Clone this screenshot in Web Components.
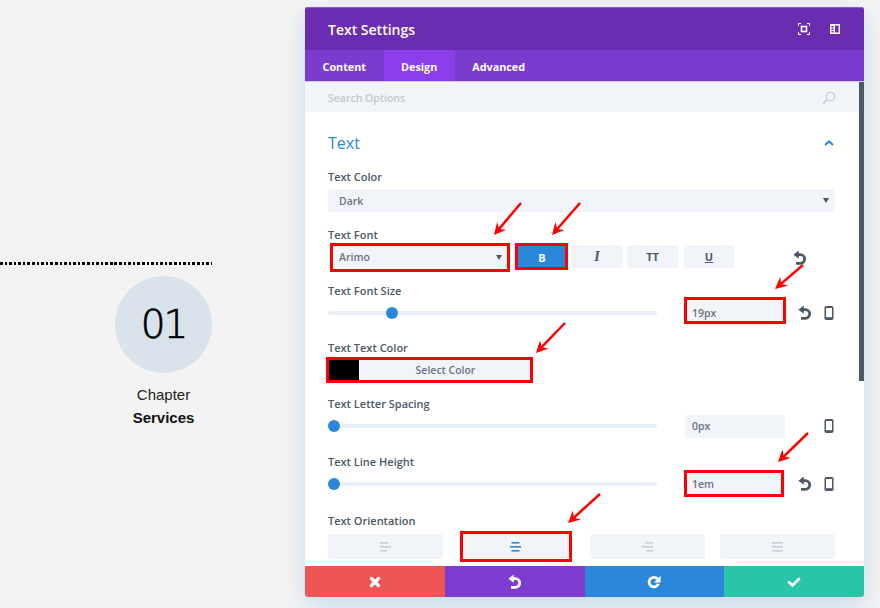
<!DOCTYPE html>
<html>
<head>
<meta charset="utf-8">
<title>Text Settings</title>
<style>
html,body{margin:0;height:100%;overflow:hidden;background:#f3f3f3;}
body{font-family:"Open Sans",sans-serif;}
</style>
</head>
<body>
<x-page>
	<x-chapter slot="left" number="01" line1="Chapter" line2="Services"></x-chapter>
	<x-panel slot="right" heading="Text Settings">
		<x-field label="Text Color" gap="4" after="15"><x-select value="Dark" height="23"></x-select></x-field>
		<x-field label="Text Font" gap="1" after="13">
			<div style="display:flex;width:507px;height:26px;align-items:flex-start">
				<x-select value="Arimo" height="24" style="width:178px;margin:1px 0 0 2px;padding-left:9px"></x-select>
				<x-toggle active style="width:52px;margin-left:8px;height:26px">B</x-toggle>
				<x-toggle style="width:52px;margin-left:3px;margin-top:1px"><b style="font:italic 700 14px 'Liberation Serif',serif">I</b></x-toggle>
				<x-toggle style="width:51px;margin-left:4px;margin-top:1px">TT</x-toggle>
				<x-toggle style="width:50px;margin-left:6px;margin-top:1px"><u>U</u></x-toggle>
				<x-icon name="undo" style="margin:6px 0 0 58px"></x-icon>
			</div>
		</x-field>
		<x-field label="Text Font Size" gap="2" after="15"><x-range pos="64" value="19px" undo></x-range></x-field>
		<x-field label="Text Text Color" gap="2" after="14"><x-color></x-color></x-field>
		<x-field label="Text Letter Spacing" gap="2" after="16"><x-range pos="6" value="0px"></x-range></x-field>
		<x-field label="Text Line Height" gap="2" after="17"><x-range pos="6" value="1em" undo></x-range></x-field>
		<x-field label="Text Orientation" gap="5" after="0">
			<div style="display:flex;width:507px;height:25px">
				<x-align lines="left" style="width:115px"></x-align>
				<x-align lines="center" active style="width:111px;margin-left:17px"></x-align>
				<x-align lines="right" style="width:115px;margin-left:19px"></x-align>
				<x-align lines="full" style="width:115px;margin-left:15px"></x-align>
			</div>
		</x-field>
	</x-panel>
</x-page>
<x-marks></x-marks>

<script>
const ICONS = {
	undo:`<svg width="16" height="16" viewBox="0 0 16 16"><path d="M5 4.700h3.400a4.300 4.300 0 0 1 0 8.600H4" fill="none" stroke="currentColor" stroke-width="2.800"/><path d="M6.800 .6v8.200L1.400 4.700z" fill="currentColor"/></svg>`,
	redo:`<svg width="16" height="16" viewBox="0 0 16 16"><path d="M11.400 4.800a4.800 4.800 0 1 0 1 5" fill="none" stroke="currentColor" stroke-width="2.800"/><path d="M14.600 1.800v6.800H7.800z" fill="currentColor"/></svg>`,
	phone:`<svg width="16" height="16" viewBox="0 0 16 16"><rect x="3.500" y="1" width="9" height="14" rx="1.800" fill="currentColor"/><rect x="5" y="3" width="6" height="9.200" fill="#fff"/></svg>`,
	close:`<svg width="16" height="16" viewBox="0 0 16 16"><path d="M4.500 4.500l7 7M11.500 4.500l-7 7" fill="none" stroke="currentColor" stroke-width="3.400" stroke-linecap="round"/></svg>`,
	check:`<svg width="16" height="16" viewBox="0 0 16 16"><path d="M3 8.200l3.400 3.200L13 5" fill="none" stroke="currentColor" stroke-width="2.800" stroke-linecap="round"/></svg>`,
	focus:`<svg width="12" height="12" viewBox="0 0 12 12"><path d="M.5 3V.5H3M9 .5h2.500V3M11.500 9v2.500H9M3 11.500H.5V9" fill="none" stroke="currentColor"/><rect x="3.500" y="3.500" width="5" height="5" fill="none" stroke="currentColor" stroke-width="1.600"/></svg>`,
	sidebar:`<svg width="12" height="12" viewBox="0 0 12 12"><path fill-rule="evenodd" d="M1 1h10v10H1zM6 2.500v7h3.600v-7zM2.400 3v1.500h2.200V3zM2.400 5.500V7h2.200V5.500zM2.400 8v1.500h2.200V8z" fill="currentColor"/></svg>`,
	search:`<svg width="14" height="14" viewBox="0 0 14 14"><circle cx="8.500" cy="5.500" r="4.200" fill="none" stroke="currentColor" stroke-width="1.300"/><path d="M5.400 8.600L1.200 12.800" stroke="currentColor" stroke-width="2"/></svg>`,
	up:`<svg width="10" height="6" viewBox="0 0 10 6"><path d="M1 5l4-3.600L9 5" fill="none" stroke="currentColor" stroke-width="2"/></svg>`
};

class XPage extends HTMLElement {
	constructor(){
		super();
		this.attachShadow({mode:"open"}).innerHTML = `<style>
			:host{display:flex;width:880px;height:608px;overflow:hidden;}
			.left{flex:none;width:212px;padding-top:262px;box-sizing:border-box;}
			.right{flex:none;margin-left:93px;padding-top:7px;}
		</style>
		<div class="left"><slot name="left"></slot></div>
		<div class="right"><slot name="right"></slot></div>`;
	}
}

class XChapter extends HTMLElement {
	connectedCallback(){
		this.attachShadow({mode:"open"}).innerHTML = `<style>
			:host{display:block;font-family:"Liberation Sans",Arial,sans-serif;color:#222;}
			.rule{height:3px;background:repeating-linear-gradient(90deg,#000 0 2.600px,transparent 2.600px 4.580px);}
			.col{width:97px;margin:11px 0 0 auto;text-align:center;}
			.num{width:97px;height:97px;border-radius:50%;background:#dae3eb;color:#000;display:flex;align-items:center;justify-content:center;
				font:200 39px "DejaVu Sans",sans-serif;letter-spacing:-2px;-webkit-text-stroke:.7px #000;}
			.l1{font-size:15px;line-height:23px;margin-top:10px;}
			.l2{font-size:15px;line-height:23px;font-weight:700;color:#111;}
		</style>
		<div class="rule"></div>
		<div class="col">
			<div class="num">${this.getAttribute("number")}</div>
			<div class="l1">${this.getAttribute("line1")}</div>
			<div class="l2">${this.getAttribute("line2")}</div>
		</div>`;
	}
}

class XPanel extends HTMLElement {
	connectedCallback(){
		this.attachShadow({mode:"open"}).innerHTML = `<style>
			:host{display:flex;flex-direction:column;width:559px;height:590px;background:#fff;border-radius:3px;overflow:hidden;box-shadow:0 8px 22px rgba(43,135,218,.22);color:#4c5866;font-family:"Open Sans",sans-serif;}
			header{flex:none;height:43px;box-sizing:border-box;background:#6a2db2;color:#fff;display:flex;align-items:center;padding:0 23px;font-size:14px;font-weight:600;border-top:1px solid #8b5cc9;}
			header span{flex:1;}
			header .i{display:flex;margin-left:19px;}
			nav{flex:none;height:32px;box-sizing:border-box;background:#7b3bce;display:flex;color:#fff;font-size:10.800px;font-weight:700;line-height:33px;border-bottom:1px solid #d8c8ee;}
			nav a{padding:0 17.500px;}
			nav a.on{background:#8c3eea;}
			.body{flex:1;min-height:0;display:flex;}
			.main{flex:1;min-width:0;display:flex;flex-direction:column;overflow:hidden;}
			.search{flex:none;height:30px;box-sizing:border-box;padding:1px 23px 0;background:#f1f4f8;display:flex;align-items:center;font-size:10.500px;font-weight:600;color:#c4c9cf;}
			.search span{flex:1;}
			.search .i{color:#c6cfd9;display:flex;}
			.scroll{flex:1;min-height:0;overflow:hidden;padding:20px 23px 0;}
			.title{display:flex;align-items:center;justify-content:space-between;color:#2b87da;font-size:16px;line-height:22px;padding-right:1px;margin-bottom:15px;}
			.title .i{display:flex;margin-right:1px;}
			.bar{flex:none;width:5px;background:linear-gradient(#4c5866 299px,#fff 299px);}
			footer{flex:none;height:31px;display:flex;color:#fff;}
			footer div{flex:1;display:flex;align-items:center;justify-content:center;}
			.f1{background:#ef5555;}.f2{background:#7d3bcf;}.f3{background:#2b87da;}.f4{background:#29c4a9;}
		</style>
		<header><span>${this.getAttribute("heading")}</span><div class="i">${ICONS.focus}</div><div class="i">${ICONS.sidebar}</div></header>
		<nav><a>Content</a><a class="on">Design</a><a>Advanced</a></nav>
		<div class="body">
			<div class="main">
				<div class="search"><span>Search Options</span><div class="i">${ICONS.search}</div></div>
				<div class="scroll">
					<div class="title"><span>Text</span><div class="i">${ICONS.up}</div></div>
					<slot></slot>
				</div>
			</div>
			<div class="bar"></div>
		</div>
		<footer><div class="f1">${ICONS.close}</div><div class="f2">${ICONS.undo}</div><div class="f3">${ICONS.redo}</div><div class="f4">${ICONS.check}</div></footer>`;
	}
}

class XField extends HTMLElement {
	connectedCallback(){
		this.attachShadow({mode:"open"}).innerHTML = `<style>
			:host{display:block;width:507px;margin-bottom:${this.getAttribute("after")}px;}
			label{display:block;font-size:11px;font-weight:600;line-height:16px;color:#4c5866;margin-bottom:${this.getAttribute("gap")}px;}
		</style>
		<label>${this.getAttribute("label")}</label><slot></slot>`;
	}
}

class XSelect extends HTMLElement {
	connectedCallback(){
		this.attachShadow({mode:"open"}).innerHTML = `<style>
			:host{display:flex;align-items:center;height:${this.getAttribute("height")}px;background:#f1f4f8;border-radius:3px;padding:0 6px 0 11px;box-sizing:border-box;font-size:10.500px;font-weight:600;color:#6a7583;}
			span{flex:1;}
			i{width:0;height:0;border:3.500px solid transparent;border-top:5px solid #4c5866;border-bottom:0;}
		</style><span>${this.getAttribute("value")}</span><i></i>`;
	}
}

class XToggle extends HTMLElement {
	connectedCallback(){
		const on = this.hasAttribute("active");
		this.attachShadow({mode:"open"}).innerHTML = `<style>
			:host{display:flex;align-items:center;justify-content:center;height:23px;box-sizing:border-box;border-radius:3px;font-size:11px;font-weight:700;background:${on?"#2b87da":"#f1f4f8"};color:${on?"#fff":"#4c5866"};}
		</style><slot></slot>`;
	}
}

class XIcon extends HTMLElement {
	connectedCallback(){
		this.attachShadow({mode:"open"}).innerHTML = `<style>
			:host{display:inline-flex;flex:none;color:#4c5866;width:16px;height:16px;}
		</style>${ICONS[this.getAttribute("name")]}`;
	}
}

class XRange extends HTMLElement {
	connectedCallback(){
		const undo = this.hasAttribute("undo");
		this.attachShadow({mode:"open"}).innerHTML = `<style>
			:host{display:flex;align-items:center;height:24px;}
			.track{position:relative;width:329px;height:4px;border-radius:2px;background:#e8eef4;flex:none;}
			.knob{position:absolute;left:${this.getAttribute("pos")}px;top:-4px;width:12px;height:12px;margin-left:-6px;border-radius:50%;background:#2b87da;}
			.val{width:100px;height:23px;margin-left:28px;box-sizing:border-box;padding-left:7px;background:#f1f4f8;border-radius:3px;font-size:10.500px;font-weight:600;line-height:23px;color:#6a7583;flex:none;}
			.u{margin-left:12px;width:16px;display:flex;color:#4c5866;flex:none;}
			.p{margin-left:8px;width:16px;display:flex;color:#4c5866;flex:none;}
		</style>
		<div class="track"><div class="knob"></div></div>
		<div class="val">${this.getAttribute("value")}</div>
		<div class="u">${undo?ICONS.undo:""}</div>
		<div class="p">${ICONS.phone}</div>`;
	}
}

class XColor extends HTMLElement {
	connectedCallback(){
		this.attachShadow({mode:"open"}).innerHTML = `<style>
			:host{display:flex;width:203px;height:24px;font-size:10.500px;font-weight:600;color:#6a7583;background:#f1f4f8;}
			i{width:31px;background:#000;border-right:1px solid #fff;}
			span{flex:1;text-align:center;line-height:24px;}
		</style><i></i><span>Select Color</span>`;
	}
}

class XAlign extends HTMLElement {
	connectedCallback(){
		const on = this.hasAttribute("active");
		const rows = {
			left:[[0,8],[0,11],[0,7]],
			center:[[1.500,8],[0,11],[1.500,8]],
			right:[[3,8],[0,11],[4,7]],
			full:[[0,11],[0,11],[0,11]]
		}[this.getAttribute("lines")];
		const lines = rows.map((r,i)=>`<rect x="${r[0]}" y="${i*4}" width="${r[1]}" height="1.600"/>`).join("");
		this.attachShadow({mode:"open"}).innerHTML = `<style>
			:host{display:flex;align-items:center;justify-content:center;height:25px;background:#f1f4f8;border-radius:3px;}
			svg{fill:${on?"#2b87da":"#c9d0da"};}
		</style><svg width="11" height="10" viewBox="0 0 11 10">${lines}</svg>`;
	}
}

// red boxes and arrows are drawn over the finished screenshot
class XMarks extends HTMLElement {
	static BOXES = [[331.5,244.5,177,26],[516.5,244.5,50,24],[327.5,358.5,204,23],[685.5,298.5,99,24],[685.5,471.5,97,24],[461.5,532.5,109,28]];
	static ARROWS = [[521,203,494,235],[580,203,552,235],[565,323,536,353],[803,265,775,289],[808,433,778,462],[600,494,568,523]];
	connectedCallback(){
		const boxes = XMarks.BOXES.map(b=>`<rect x="${b[0]}" y="${b[1]}" width="${b[2]}" height="${b[3]}"/>`).join("");
		const arrows = XMarks.ARROWS.map(([x1,y1,x2,y2])=>{
			const a = Math.atan2(y2-y1,x2-x1);
			const pt = (d,o)=>`${x2-Math.cos(a)*d-Math.sin(a)*o},${y2-Math.sin(a)*d+Math.cos(a)*o}`;
			return `<line x1="${x1}" y1="${y1}" x2="${pt(6,0).split(",")[0]}" y2="${pt(6,0).split(",")[1]}"/><polygon points="${x2},${y2} ${pt(12,6)} ${pt(8,0)} ${pt(12,-6)}"/>`;
		}).join("");
		this.attachShadow({mode:"open"}).innerHTML = `<style>
			:host{position:absolute;left:0;top:0;width:880px;height:608px;pointer-events:none;}
			rect{fill:none;stroke:#f00;stroke-width:3;}
			line{stroke:#f00;stroke-width:2.500;}
			polygon{fill:#f00;}
		</style><svg width="880" height="608">${boxes}${arrows}</svg>`;
	}
}

customElements.define("x-page", XPage);
customElements.define("x-chapter", XChapter);
customElements.define("x-panel", XPanel);
customElements.define("x-field", XField);
customElements.define("x-select", XSelect);
customElements.define("x-toggle", XToggle);
customElements.define("x-icon", XIcon);
customElements.define("x-range", XRange);
customElements.define("x-color", XColor);
customElements.define("x-align", XAlign);
customElements.define("x-marks", XMarks);
</script>
</body>
</html>
